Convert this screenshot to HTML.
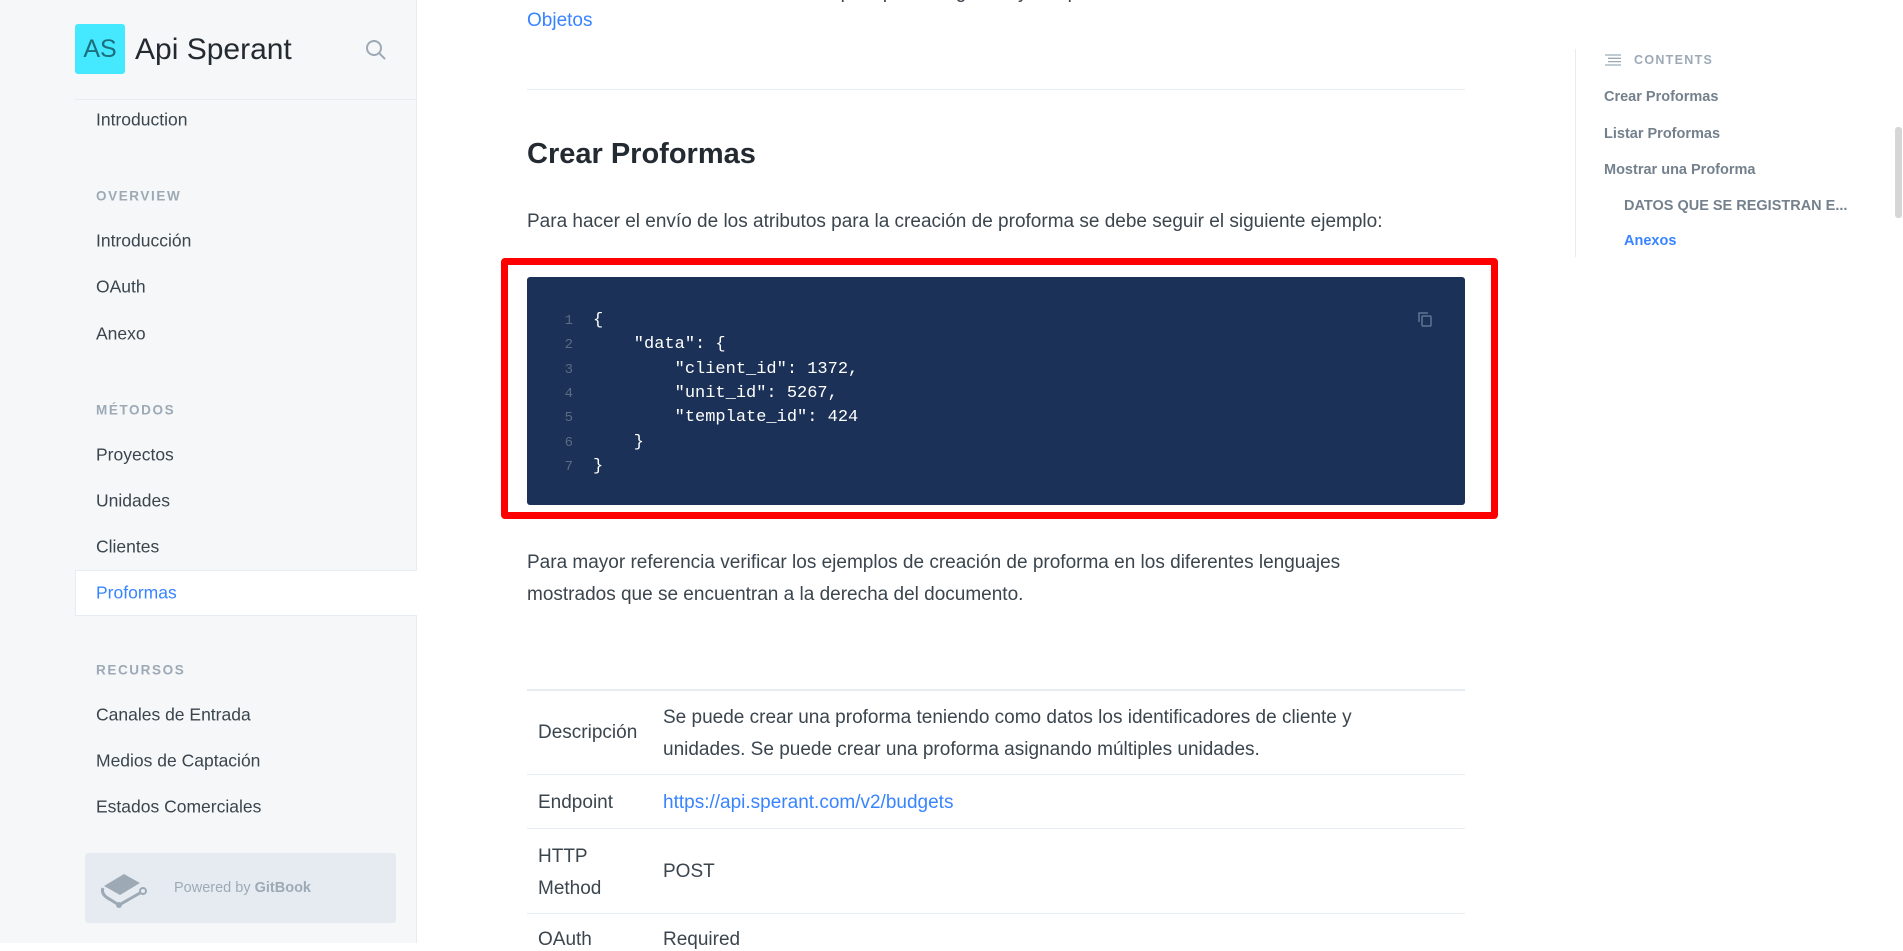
<!DOCTYPE html>
<html><head><meta charset="utf-8"><style>
*{margin:0;padding:0;box-sizing:border-box}
body{width:1903px;height:943px;overflow:hidden;background:#fff;font-family:"Liberation Sans",Roboto,sans-serif;color:#3b454e;position:relative}
.a{position:absolute;white-space:nowrap}
#side{position:absolute;left:0;top:0;width:417px;height:943px;background:#f5f7f9;border-right:1px solid #e6ecf1}
.nav{position:absolute;left:96px;font-size:17.5px;color:#3b454e;transform:translateY(-50%)}
.hd{position:absolute;left:96px;font-size:13.5px;font-weight:bold;letter-spacing:1.6px;color:#9daab6;transform:translateY(-50%)}
.ln{position:absolute;left:561px;width:12px;text-align:right;color:#5b6b84;font-family:"Liberation Mono",monospace;font-size:14px}
.cl{position:absolute;left:593px;white-space:pre;font-family:"Liberation Mono",monospace;font-size:17px;color:#fff}
.toc{position:absolute;font-size:14.5px;font-weight:bold;color:#74818d;transform:translateY(-50%);white-space:nowrap}
.p{font-size:19px;color:#3b454e}
.hr{position:absolute;left:527px;width:938px;height:1px;background:#e6ecf1}
</style></head><body>
<div id="side">
  <div class="a" style="left:75px;top:24px;width:50px;height:50px;background:#44e9ff;border-radius:3px;color:#1c6f7d;font-size:25px;line-height:50px;text-align:center">AS</div>
  <div class="a" style="left:135px;top:30px;font-size:30px;color:#242a31;line-height:40px">Api Sperant</div>
  <svg class="a" style="left:365px;top:39px" width="22" height="22" viewBox="0 0 22 22"><circle cx="9" cy="9" r="7" fill="none" stroke="#9daab6" stroke-width="2"/><path d="M14 14l5.5 5.5" stroke="#9daab6" stroke-width="2" stroke-linecap="round"/></svg>
  <div class="a" style="left:75px;top:99px;width:342px;height:1px;background:#e6ecf1"></div>
  <div class="nav" style="top:120px">Introduction</div>
  <div class="hd" style="top:196px">OVERVIEW</div>
  <div class="nav" style="top:241px">Introducción</div>
  <div class="nav" style="top:287px">OAuth</div>
  <div class="nav" style="top:334px">Anexo</div>
  <div class="hd" style="top:410px">MÉTODOS</div>
  <div class="nav" style="top:455px">Proyectos</div>
  <div class="nav" style="top:501px">Unidades</div>
  <div class="nav" style="top:547px">Clientes</div>
  <div class="a" style="left:75px;top:570px;width:342px;height:46px;background:#fff;border:1px solid #e6ecf1;border-right:none"></div>
  <div class="nav" style="top:593px;color:#3884ff">Proformas</div>
  <div class="hd" style="top:670px">RECURSOS</div>
  <div class="nav" style="top:715px">Canales de Entrada</div>
  <div class="nav" style="top:761px">Medios de Captación</div>
  <div class="nav" style="top:807px">Estados Comerciales</div>
  <div class="a" style="left:85px;top:853px;width:311px;height:70px;background:#e6ebf1;border-radius:3px"></div>
  <svg class="a" style="left:100px;top:866px" width="50" height="42" viewBox="0 0 50 42"><path d="M4 20 L24 8 L40 17 L20 29 Z" fill="#9daab6"/><path d="M3 22 C1 27 5 31 11 34 L19 39 L40 27" fill="none" stroke="#9daab6" stroke-width="3"/><circle cx="43" cy="25" r="3" fill="none" stroke="#9daab6" stroke-width="2"/><circle cx="19" cy="39" r="3" fill="#9daab6"/></svg>
  <div class="a" style="left:174px;top:878px;font-size:14.5px;color:#9daab6;line-height:20px">Powered by <b>GitBook</b></div>
</div>

<div class="a" style="left:527px;top:-18px;font-size:19px;color:#3b454e">Para ver más información de los campos que se registran y sus posibles valores ver la sección Anexos</div>
<div class="a" style="left:527px;top:10px;font-size:19px;color:#3884ff">Objetos</div>
<div class="hr" style="top:89px"></div>
<div class="a" style="left:527px;top:138px;font-size:29px;font-weight:bold;color:#242a31">Crear Proformas</div>
<div class="a p" style="left:527px;top:211px">Para hacer el envío de los atributos para la creación de proforma se debe seguir el siguiente ejemplo:</div>

<div class="a" style="left:501px;top:258px;width:997px;height:261px;border:7px solid #ff0000;border-radius:4px"></div>
<div class="a" style="left:527px;top:277px;width:938px;height:228px;background:#1b3157;border-radius:3px"></div>
<svg class="a" style="left:1416px;top:310px" width="18" height="18" viewBox="0 0 18 18" fill="none" stroke="#5f7594" stroke-width="1.5"><path d="M3 12V3h9"/><rect x="6" y="6" width="9" height="10" rx="1"/></svg>
<div class="ln" style="top:313px">1</div><div class="cl" style="top:311px">{</div>
<div class="ln" style="top:337px">2</div><div class="cl" style="top:335px">    "data": {</div>
<div class="ln" style="top:362px">3</div><div class="cl" style="top:360px">        "client_id": 1372,</div>
<div class="ln" style="top:386px">4</div><div class="cl" style="top:384px">        "unit_id": 5267,</div>
<div class="ln" style="top:410px">5</div><div class="cl" style="top:408px">        "template_id": 424</div>
<div class="ln" style="top:435px">6</div><div class="cl" style="top:433px">    }</div>
<div class="ln" style="top:459px">7</div><div class="cl" style="top:457px">}</div>

<div class="a p" style="left:527px;top:547px;line-height:32px">Para mayor referencia verificar los ejemplos de creación de proforma en los diferentes lenguajes<br>mostrados que se encuentran a la derecha del documento.</div>

<div class="hr" style="top:689px;height:2px"></div>
<div class="a p" style="left:538px;top:722px">Descripción</div>
<div class="a p" style="left:663px;top:702px;line-height:32px">Se puede crear una proforma teniendo como datos los identificadores de cliente y<br>unidades. Se puede crear una proforma asignando múltiples unidades.</div>
<div class="hr" style="top:774px"></div>
<div class="a p" style="left:538px;top:792px">Endpoint</div>
<div class="a p" style="left:663px;top:792px;color:#3884ff">https://api.sperant.com/v2/budgets</div>
<div class="hr" style="top:828px"></div>
<div class="a p" style="left:538px;top:841px;line-height:32px">HTTP<br>Method</div>
<div class="a p" style="left:663px;top:861px">POST</div>
<div class="hr" style="top:913px"></div>
<div class="a p" style="left:538px;top:929px">OAuth</div>
<div class="a p" style="left:663px;top:929px">Required</div>

<div class="a" style="left:1575px;top:49px;width:1px;height:208px;background:#e6ecf1"></div>
<svg class="a" style="left:1605px;top:54px" width="16" height="12" viewBox="0 0 16 12" stroke="#9daab6" stroke-width="1.3"><path d="M0 1h16M3 4.3h13M3 7.6h13M0 11h16"/></svg>
<div class="a" style="left:1634px;top:53px;font-size:12.5px;font-weight:bold;letter-spacing:1.3px;color:#9daab6">CONTENTS</div>
<div class="toc" style="left:1604px;top:97px">Crear Proformas</div>
<div class="toc" style="left:1604px;top:134px">Listar Proformas</div>
<div class="toc" style="left:1604px;top:170px">Mostrar una Proforma</div>
<div class="toc" style="left:1624px;top:206px">DATOS QUE SE REGISTRAN E...</div>
<div class="toc" style="left:1624px;top:241px;color:#3884ff">Anexos</div>

<div class="a" style="left:1895px;top:127px;width:7px;height:91px;background:#d6d6d6;border-radius:3px"></div>
</body></html>
